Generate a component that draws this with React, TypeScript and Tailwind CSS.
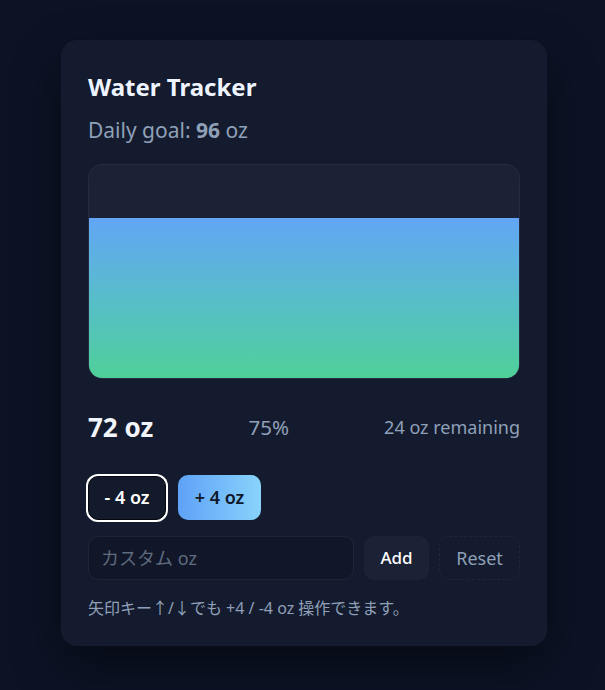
import { useState } from "react";

const GOAL = 96;
const STEP = 4;

export default function App() {
  const [amount, setAmount] = useState(72);
  const [custom, setCustom] = useState("");
  const pct = Math.round((amount / GOAL) * 100);

  return (
    <div
      className="min-h-screen w-full bg-[#0b1325] flex justify-center pt-10 pl-[3px]"
      style={{ fontFamily: '"Noto Sans", "Noto Sans CJK JP", sans-serif' }}
    >
      <div className="w-[486px] h-[606px] rounded-2xl bg-[#141b2e] px-[27px] pt-[31px] shadow-[0_20px_50px_rgba(0,0,0,0.45)] flex flex-col">
        <h1 className="text-[24px] leading-8 font-bold text-[#eef4ff]">Water Tracker</h1>
        <p className="mt-[13px] text-[21px] leading-7 text-[#8fa0b8]">
          Daily goal: <span className="font-bold">{GOAL}</span> oz
        </p>

        <div className="mt-5 h-[215px] rounded-[14px] bg-[#1c2136] border border-[#252b40] overflow-hidden flex flex-col justify-end">
          <div
            className="w-full bg-gradient-to-b from-[#63a5f5] to-[#4fd098]"
            style={{ height: `${Math.min(pct, 100)}%` }}
          />
        </div>

        <div className="mt-8 flex items-center justify-between h-8">
          <span className="text-[26px] font-bold text-[#f1f5fb]">{amount} oz</span>
          <span className="text-[20.5px] text-[#8fa0b8]">{pct}%</span>
          <span className="text-[18px] text-[#8fa0b8]">{GOAL - amount} oz remaining</span>
        </div>

        <div className="mt-8 flex gap-3 items-center">
          <button
            onClick={() => setAmount((a) => Math.max(0, a - STEP))}
            className="h-[44px] w-[78px] rounded-[10px] bg-[#131a2b] border border-[#05070c] ring-2 ring-white text-white text-[18px] font-semibold"
          >
            - 4 oz
          </button>
          <button
            onClick={() => setAmount((a) => a + STEP)}
            className="h-[45px] w-[83px] rounded-[10px] bg-gradient-to-r from-[#5fa2f7] to-[#88d3fb] text-[#0f172a] text-[18px] font-semibold"
          >
            + 4 oz
          </button>
        </div>

        <div className="mt-4 flex gap-[10px] h-[44px]">
          <input
            value={custom}
            onChange={(e) => setCustom(e.target.value)}
            placeholder="カスタム oz"
            className="flex-1 min-w-0 rounded-[10px] bg-[#111729] border border-[#1f2639] px-3 text-[18px] text-white placeholder:text-[#5f6b7f] outline-none"
          />
          <button
            onClick={() => {
              const n = Number(custom);
              if (n > 0) setAmount((a) => a + n);
              setCustom("");
            }}
            className="w-[65px] rounded-[10px] bg-[#1c2236] text-white text-[17px] font-medium"
          >
            Add
          </button>
          <button
            onClick={() => setAmount(0)}
            className="w-[81px] rounded-[10px] border border-dashed border-[#1e2638] text-[#8fa0b8] text-[18px]"
          >
            Reset
          </button>
        </div>

        <p className="mt-4 text-[16px] leading-6 text-[#8fa0b8]">
          矢印キー↑/↓でも +4 / -4 oz 操作できます。
        </p>
      </div>
    </div>
  );
}
